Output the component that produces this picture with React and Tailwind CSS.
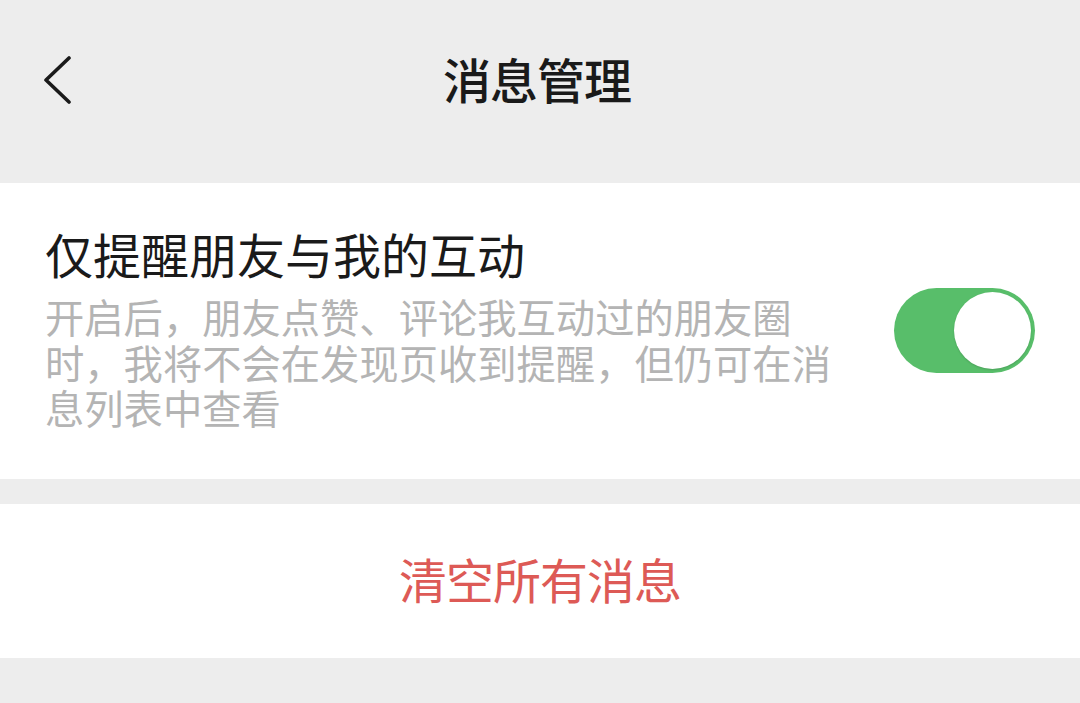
import React, { useState } from "react";

const font = { fontFamily: '"Noto Sans CJK SC", "Noto Sans", sans-serif' };

const BackIcon = () => (
  <svg width="30" height="50" viewBox="0 0 30 50" fill="none">
    <path d="M26 2 L3 24 L26 46" stroke="#1a1a1a" strokeWidth="3.6" strokeLinecap="round" strokeLinejoin="round" />
  </svg>
);

const MessageSettings = () => {
  const [onlyFriends, setOnlyFriends] = useState(true);

  return (
    <div className="min-h-[703px] bg-[#ededed]" style={font}>
      {/* nav bar */}
      <div className="grid grid-cols-[1fr_auto_1fr] items-center h-[162px] px-[43px] mb-[21px]">
        <button className="flex items-center justify-start w-fit">
          <BackIcon />
        </button>
        <h1 className="text-[48px] leading-[56px] font-medium text-[#1a1a1a] tracking-[-1px] pb-[6px] -ml-[6px]">消息管理</h1>
        <div />
      </div>

      {/* toggle row */}
      <div className="bg-white flex items-center justify-between px-[45px]">
        <div className="w-[815px] pt-[42px] pb-[49px]">
          <div className="text-[48px] leading-[56px] text-[#1a1a1a]">仅提醒朋友与我的互动</div>
          <p className="mt-[12px] text-[39.3px] leading-[45.5px] text-[#b4b4b4]">
            开启后，朋友点赞、评论我互动过的朋友圈时，我将不会在发现页收到提醒，但仍可在消息列表中查看
          </p>
        </div>
        <button
          onClick={() => setOnlyFriends(!onlyFriends)}
          className={`flex items-center w-[141px] h-[85px] rounded-full p-[4px] ${onlyFriends ? "bg-[#58be6a] justify-end" : "bg-[#e5e5e5] justify-start"}`}
        >
          <span className="block w-[77px] h-[77px] rounded-full bg-white shadow-[0_1px_2px_rgba(0,0,0,0.15)]" />
        </button>
      </div>

      <div className="h-[25px]" />

      {/* clear */}
      <button className="w-full h-[154px] bg-white flex items-center justify-center pb-[6px]">
        <span className="text-[48px] leading-[56px] text-[#dd5a56] tracking-[-1px]">清空所有消息</span>
      </button>
    </div>
  );
};

export default function App() {
  return <MessageSettings />;
}
